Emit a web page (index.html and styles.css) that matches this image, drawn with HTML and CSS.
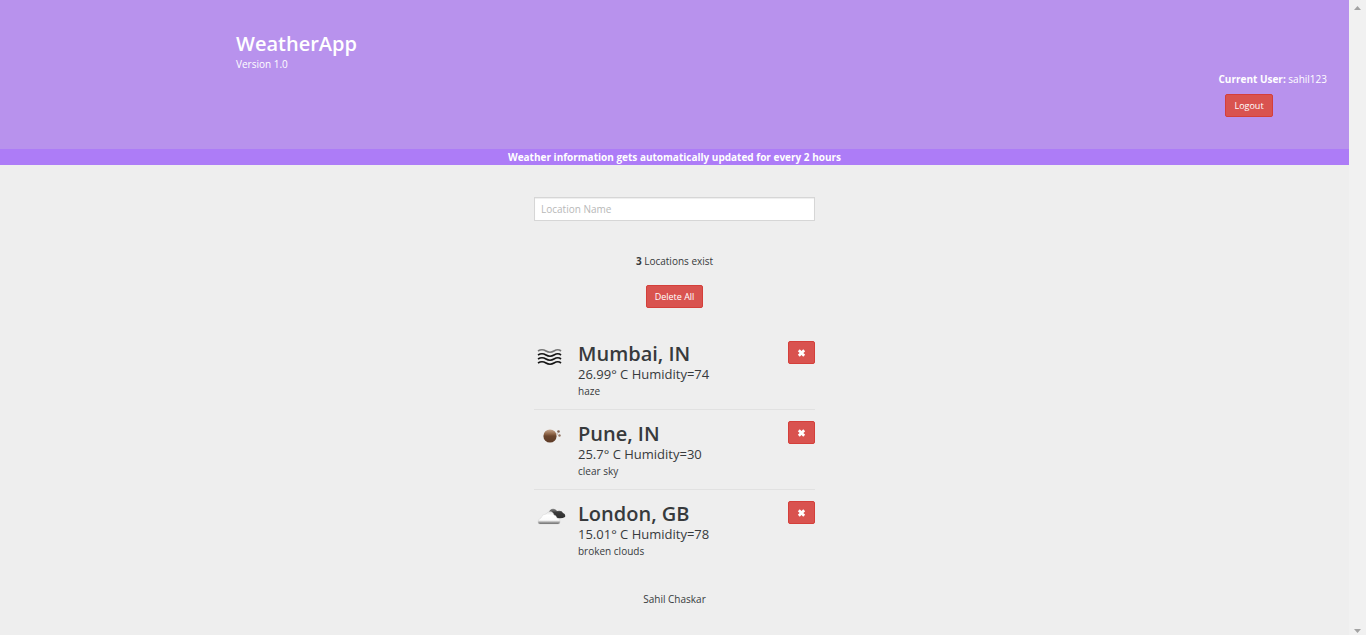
FILE: index.html
```html
<!DOCTYPE html>
<html lang="en">
<head>
<meta charset="utf-8">
<title>WeatherApp</title>
<link rel="stylesheet" href="styles.css">
</head>
<body>
<div class="shell">
  <div class="page">
    <header class="banner">
      <div class="brand">
        <h1 class="brand-name">WeatherApp</h1>
        <p class="brand-version">Version 1.0</p>
      </div>
      <div class="account">
        <p class="account-user"><b>Current User:</b> sahil123</p>
        <button class="btn" type="button">Logout</button>
      </div>
    </header>
    <p class="notice">Weather information gets automatically updated for every 2 hours</p>
    <main class="content">
      <input class="search" type="text" placeholder="Location Name" aria-label="Location Name">
      <p class="count"><b>3</b> Locations exist</p>
      <button class="btn" type="button">Delete All</button>
      <ul class="locations">
        <li class="location">
          <svg class="icon" viewBox="0 0 32 32" aria-hidden="true">
            <g fill="none" stroke="#151515" stroke-width="1.7">
              <path stroke="#777" d="M4 10q4-2.500 8 0t8 0 7 0"/>
              <path d="M4 14q4-2.500 8 0t8 0 7 0"/>
              <path d="M4 18q4-2.500 8 0t8 0 7 0"/>
              <path d="M4 22q4-2.500 8 0t8 0 7 0"/>
            </g>
          </svg>
          <div class="info">
            <h2 class="city">Mumbai, IN</h2>
            <p class="reading">26.99° C Humidity=74</p>
            <p class="sky">haze</p>
          </div>
          <button class="btn remove" type="button" aria-label="Remove Mumbai"><svg class="cross" viewBox="0 0 10 10" aria-hidden="true"><path d="M2 2l6 6M8 2l-6 6"/></svg></button>
        </li>
        <li class="location">
          <svg class="icon" viewBox="0 0 32 32" aria-hidden="true">
            <defs>
              <linearGradient id="orb" x1="0" y1="0" x2="0" y2="1">
                <stop offset="0" stop-color="#c8a78f"/>
                <stop offset=".35" stop-color="#8d6447"/>
                <stop offset=".5" stop-color="#6c462e"/>
                <stop offset="1" stop-color="#5c3a26"/>
              </linearGradient>
            </defs>
            <circle cx="16" cy="15" r="6.600" fill="url(#orb)"/>
            <circle cx="24.500" cy="10.500" r="1.300" fill="#806050"/>
            <circle cx="25.500" cy="14.500" r="1.200" fill="#947664"/>
            <circle cx="23" cy="13" r=".8" fill="#c0a595"/>
          </svg>
          <div class="info">
            <h2 class="city">Pune, IN</h2>
            <p class="reading">25.7° C Humidity=30</p>
            <p class="sky">clear sky</p>
          </div>
          <button class="btn remove" type="button" aria-label="Remove Pune"><svg class="cross" viewBox="0 0 10 10" aria-hidden="true"><path d="M2 2l6 6M8 2l-6 6"/></svg></button>
        </li>
        <li class="location">
          <svg class="icon" viewBox="0 0 32 32" aria-hidden="true">
            <defs>
              <linearGradient id="pale" x1="0" y1="0" x2="0" y2="1">
                <stop offset="0" stop-color="#dedede"/>
                <stop offset=".3" stop-color="#fff"/>
                <stop offset=".7" stop-color="#fafafa"/>
                <stop offset=".85" stop-color="#aaa"/>
                <stop offset="1" stop-color="#555"/>
              </linearGradient>
              <linearGradient id="dark" x1="0" y1="0" x2="0" y2="1">
                <stop offset="0" stop-color="#888"/>
                <stop offset=".4" stop-color="#3a3a3a"/>
                <stop offset="1" stop-color="#303030"/>
              </linearGradient>
            </defs>
            <path fill="url(#dark)" d="M15 12c0-4 5-6 8-2q5-1 6 2 3 1 2 4-3 2-8 1-3-3-8-5z"/>
            <path fill="url(#pale)" stroke="#ccc" stroke-width=".4" d="M6 23q-2 0-2-2 0-3 3-4 1-4 5-4c3-4 7-3 8 1q2 0 3 3 4 1 3 4 0 2-2 2z"/>
          </svg>
          <div class="info">
            <h2 class="city">London, GB</h2>
            <p class="reading">15.01° C Humidity=78</p>
            <p class="sky">broken clouds</p>
          </div>
          <button class="btn remove" type="button" aria-label="Remove London"><svg class="cross" viewBox="0 0 10 10" aria-hidden="true"><path d="M2 2l6 6M8 2l-6 6"/></svg></button>
        </li>
      </ul>
      <footer class="author">Sahil Chaskar</footer>
    </main>
  </div>
  <div class="scrollbar" aria-hidden="true">
    <svg class="arrow" viewBox="0 0 17 17"><path d="M5 10l3.500-4 3.500 4z"/></svg>
    <svg class="arrow" viewBox="0 0 17 17"><path d="M5 7l3.500 4 3.500-4z"/></svg>
  </div>
</div>
</body>
</html>
```
FILE: styles.css
```css
* {
  box-sizing: border-box;
}

body,
h1,
h2,
p,
ul {
  margin: 0;
}

body {
  background: #eee;
  color: #373a3c;
  font-family: "Segoe UI", "Open Sans", "Noto Sans", sans-serif;
  font-size: 10px;
  line-height: 16px;
}

.shell {
  display: flex;
  min-height: 100vh;
}

.page {
  flex: 1;
}

.banner {
  display: flex;
  justify-content: space-between;
  padding: 32px 22px 32px 236px;
  background: #b892ed;
  color: #fff;
}

.brand-name {
  font-size: 20px;
  font-weight: 600;
  line-height: 24px;
}

.account {
  padding-top: 39px;
}

.account-user {
  margin-bottom: 7px;
}

.account .btn {
  margin-left: 7px;
}

.btn {
  height: 23px;
  padding: 0 8px;
  border: 1px solid #d43f3a;
  border-radius: 2px;
  background: #d9534f;
  color: #fff;
  font-family: inherit;
  font-size: 9px;
  font-weight: 500;
  line-height: 16px;
}

.notice {
  background: #ad7cf7;
  color: #fff;
  font-weight: 700;
  text-align: center;
}

.content {
  display: flex;
  flex-direction: column;
  align-items: center;
  width: 281px;
  max-width: 100%;
  margin: 0 auto;
  padding: 32px 0;
}

.search {
  width: 100%;
  height: 24px;
  padding: 0 6px;
  border: 1px solid #d6d6d6;
  border-radius: 0;
  background: #fff;
  box-shadow: inset 0 1px 1px #eee;
  font-family: inherit;
  font-size: 10px;
}

.search::placeholder {
  color: #b8b8b8;
}

.count {
  margin: 32px 0 16px;
}

.locations {
  width: 100%;
  margin-top: 22px;
  padding: 0;
  list-style: none;
}

.location {
  display: flex;
  align-items: flex-start;
  padding: 11px 0 10px;
}

.location + .location {
  border-top: 1px solid #e1e1e1;
}

.icon {
  width: 32px;
  height: 32px;
  margin-right: 12px;
}

.info {
  flex: 1;
  padding-top: 1px;
}

.city {
  font-size: 20px;
  font-weight: 600;
  line-height: 24px;
}

.reading {
  font-size: 13px;
  line-height: 17px;
}

.remove {
  display: flex;
  align-items: center;
  justify-content: center;
  width: 27px;
}

.cross {
  width: 10px;
  height: 10px;
  fill: none;
  stroke: #fff;
  stroke-width: 3;
}

.author {
  margin-top: 22px;
}

.scrollbar {
  display: flex;
  flex-direction: column;
  justify-content: space-between;
  width: 17px;
  background: #f1f1f1;
}

.arrow {
  width: 17px;
  height: 17px;
  fill: #a3a3a3;
}
```
